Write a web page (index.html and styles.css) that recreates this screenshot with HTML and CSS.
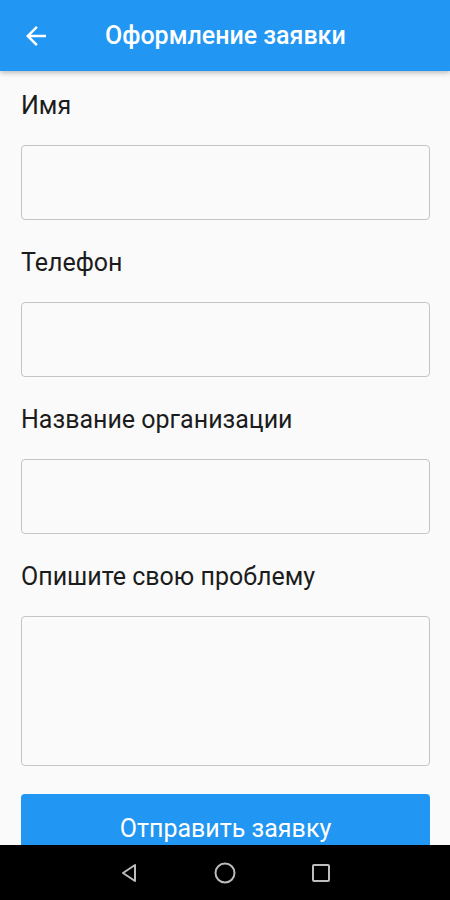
FILE: index.html
```html
<!DOCTYPE html>
<html lang="ru">
<head>
<meta charset="utf-8">
<title>Оформление заявки</title>
<link rel="stylesheet" href="styles.css">
</head>
<body>
<header class="appbar">
  <button class="back" aria-label="Назад">
    <svg width="30" height="30" viewBox="0 0 24 24"><path d="M20 11H7.83l5.59-5.59L12 4l-8 8 8 8 1.41-1.41L7.83 13H20v-2z" fill="#fff"/></svg>
  </button>
  <h1 class="title">Оформление заявки</h1>
</header>
<main class="form">
  <label class="label label-first">Имя</label>
  <div class="input"></div>
  <label class="label">Телефон</label>
  <div class="input"></div>
  <label class="label">Название организации</label>
  <div class="input"></div>
  <label class="label">Опишите свою проблему</label>
  <div class="input textarea"></div>
  <button class="submit">Отправить заявку</button>
</main>
<nav class="navbar">
  <svg width="22" height="22" viewBox="0 0 22 22"><path d="M17 3 L5 11 L17 19 Z" fill="none" stroke="#bdbdbd" stroke-width="2" stroke-linejoin="round"/></svg>
  <svg width="24" height="24" viewBox="0 0 24 24"><circle cx="12" cy="12" r="9.5" fill="none" stroke="#bdbdbd" stroke-width="2"/></svg>
  <svg width="22" height="22" viewBox="0 0 22 22"><rect x="3" y="3" width="16" height="16" rx="1" fill="none" stroke="#bdbdbd" stroke-width="2"/></svg>
</nav>
</body>
</html>
```
FILE: styles.css
```css
* { box-sizing: border-box; }
html, body { margin: 0; padding: 0; }
body {
  background: #fafafa;
  font-family: Roboto, "Noto Sans", sans-serif;
  width: 450px;
  height: 900px;
  overflow: hidden;
}
.appbar {
  height: 71px;
  background: #2196f3;
  display: flex;
  align-items: center;
  box-shadow: 0 2px 5px rgba(0,0,0,0.25);
  position: relative;
  z-index: 1;
}
.back {
  background: none;
  border: none;
  padding: 0;
  margin-left: 21px;
  width: 30px;
  height: 30px;
  display: flex;
}
.title {
  margin: 0 0 0 54px;
  color: #fff;
  font-size: 25px;
  font-weight: 500;
}
.form {
  padding: 0 20px 0 21px;
  display: flex;
  flex-direction: column;
}
.label {
  display: block;
  font-size: 25px;
  line-height: 26px;
  color: #1c1c1c;
  margin: 30px 0 26px;
}
.label-first { margin-top: 22px; }
.input {
  height: 75px;
  border: 1.5px solid #c4c4c4;
  border-radius: 4px;
  background: #fafafa;
}
.textarea { height: 150px; }
.submit {
  margin-top: 28px;
  height: 68px;
  border: none;
  border-radius: 4px;
  background: #2196f3;
  color: #fff;
  font-family: Roboto, sans-serif;
  font-size: 25px;
  padding: 0;
}
.navbar {
  position: fixed;
  left: 0;
  bottom: 0;
  width: 450px;
  height: 55px;
  background: #000;
  display: flex;
  align-items: center;
  justify-content: center;
  gap: 73px;
}
```
